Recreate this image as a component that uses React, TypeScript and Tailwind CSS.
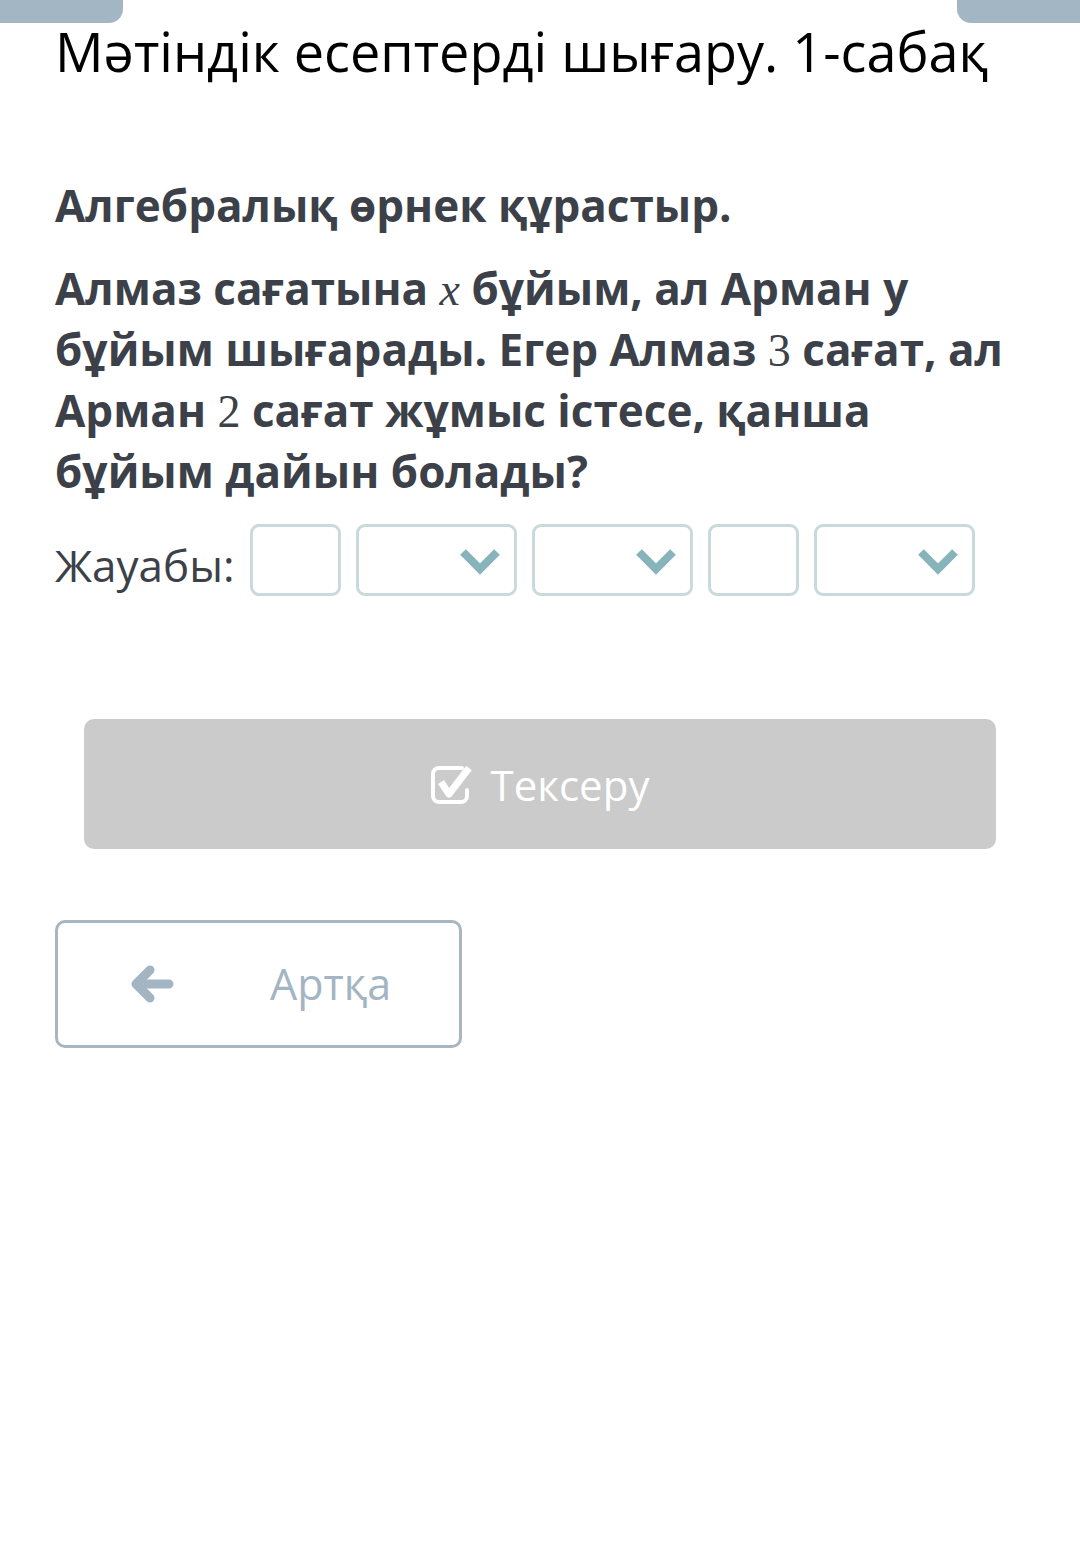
const font = { fontFamily: '"Open Sans", "Liberation Sans", sans-serif' };

function Math({ children, italic }: { children: string; italic?: boolean }) {
  return (
    <span
      className={`font-normal text-[46px] leading-none ${italic ? 'italic' : ''}`}
      style={{ fontFamily: '"Liberation Serif", serif' }}
    >
      {children}
    </span>
  );
}

function Chevron() {
  return (
    <svg width="42" height="30" viewBox="0 0 42 30" fill="none">
      <path d="M4 5 L21 22 L38 5" stroke="#87b3bb" strokeWidth="8" />
    </svg>
  );
}

function Box({ select }: { select?: boolean }) {
  return (
    <div
      className={`h-[72px] ${select ? 'w-[161px]' : 'w-[91px]'} flex items-center justify-end pr-[13px] rounded-[9px] border-[3px] border-[#c9d9dc] bg-white`}
    >
      {select && (
        <div className="mt-[3px]">
          <Chevron />
        </div>
      )}
    </div>
  );
}

function CheckIcon() {
  return (
    <svg width="46" height="40" viewBox="0 0 46 40" fill="none">
      <path
        d="M31 4 H8 a6 6 0 0 0 -6 6 V32 a6 6 0 0 0 6 6 H30 a6 6 0 0 0 6 -6 V26"
        stroke="white"
        strokeWidth="4"
        strokeLinecap="round"
      />
      <path d="M10 18 L18 30 L38 4" stroke="white" strokeWidth="7" strokeLinejoin="round" />
    </svg>
  );
}

function ArrowLeft() {
  return (
    <svg width="46" height="40" viewBox="0 0 46 40" fill="none">
      <path
        d="M21 6 L7 20 L21 34 M8 20 H40"
        stroke="#a3b5c2"
        strokeWidth="9"
        strokeLinecap="round"
        strokeLinejoin="round"
      />
    </svg>
  );
}

export default function App() {
  return (
    <div className="min-h-[1564px] bg-white" style={font}>
      <div className="flex justify-between h-[23px]">
        <div className="w-[123px] h-[23px] bg-[#a3b6c3] rounded-br-[14px]" />
        <div className="w-[123px] h-[23px] bg-[#a3b6c3] rounded-bl-[14px]" />
      </div>

      <div className="px-[55px]">
        <h1 className="text-[54px] leading-[64px] text-black font-normal -mt-[4px] whitespace-nowrap">
          Мәтіндік есептерді шығару. 1-сабақ
        </h1>

        <h2 className="mt-[92px] text-[44px] leading-[61px] font-bold text-[#3c4149]">
          Алгебралық өрнек құрастыр.
        </h2>

        <p className="mt-[22px] text-[44px] leading-[61px] font-bold text-[#3c4149]">
          Алмаз сағатына <Math italic>x</Math> бұйым, ал Арман y бұйым шығарады. Егер Алмаз{' '}
          <Math>3</Math> сағат, ал Арман <Math>2</Math> сағат жұмыс істесе, қанша бұйым дайын
          болады?
        </p>

        <div className="mt-[22px] flex items-center gap-[15px]">
          <span className="text-[44px] leading-[60px] text-[#3c4149] mr-[1px] translate-y-[5px]">Жауабы:</span>
          <Box />
          <Box select />
          <Box select />
          <Box />
          <Box select />
        </div>

        <div className="mt-[123px] px-[29px]">
          <div className="h-[130px] rounded-[10px] bg-[#cbcbcb] flex items-center justify-center gap-[14px]">
            <CheckIcon />
            <span className="text-[42px] text-white">Тексеру</span>
          </div>
        </div>

        <div className="mt-[71px] w-[407px] h-[128px] rounded-[10px] border-[3px] border-[#a7b6c0] flex items-center">
          <div className="ml-[71px]">
            <ArrowLeft />
          </div>
          <span className="ml-[95px] text-[43px] text-[#a3b5c2]">Артқа</span>
        </div>
      </div>
    </div>
  );
}
